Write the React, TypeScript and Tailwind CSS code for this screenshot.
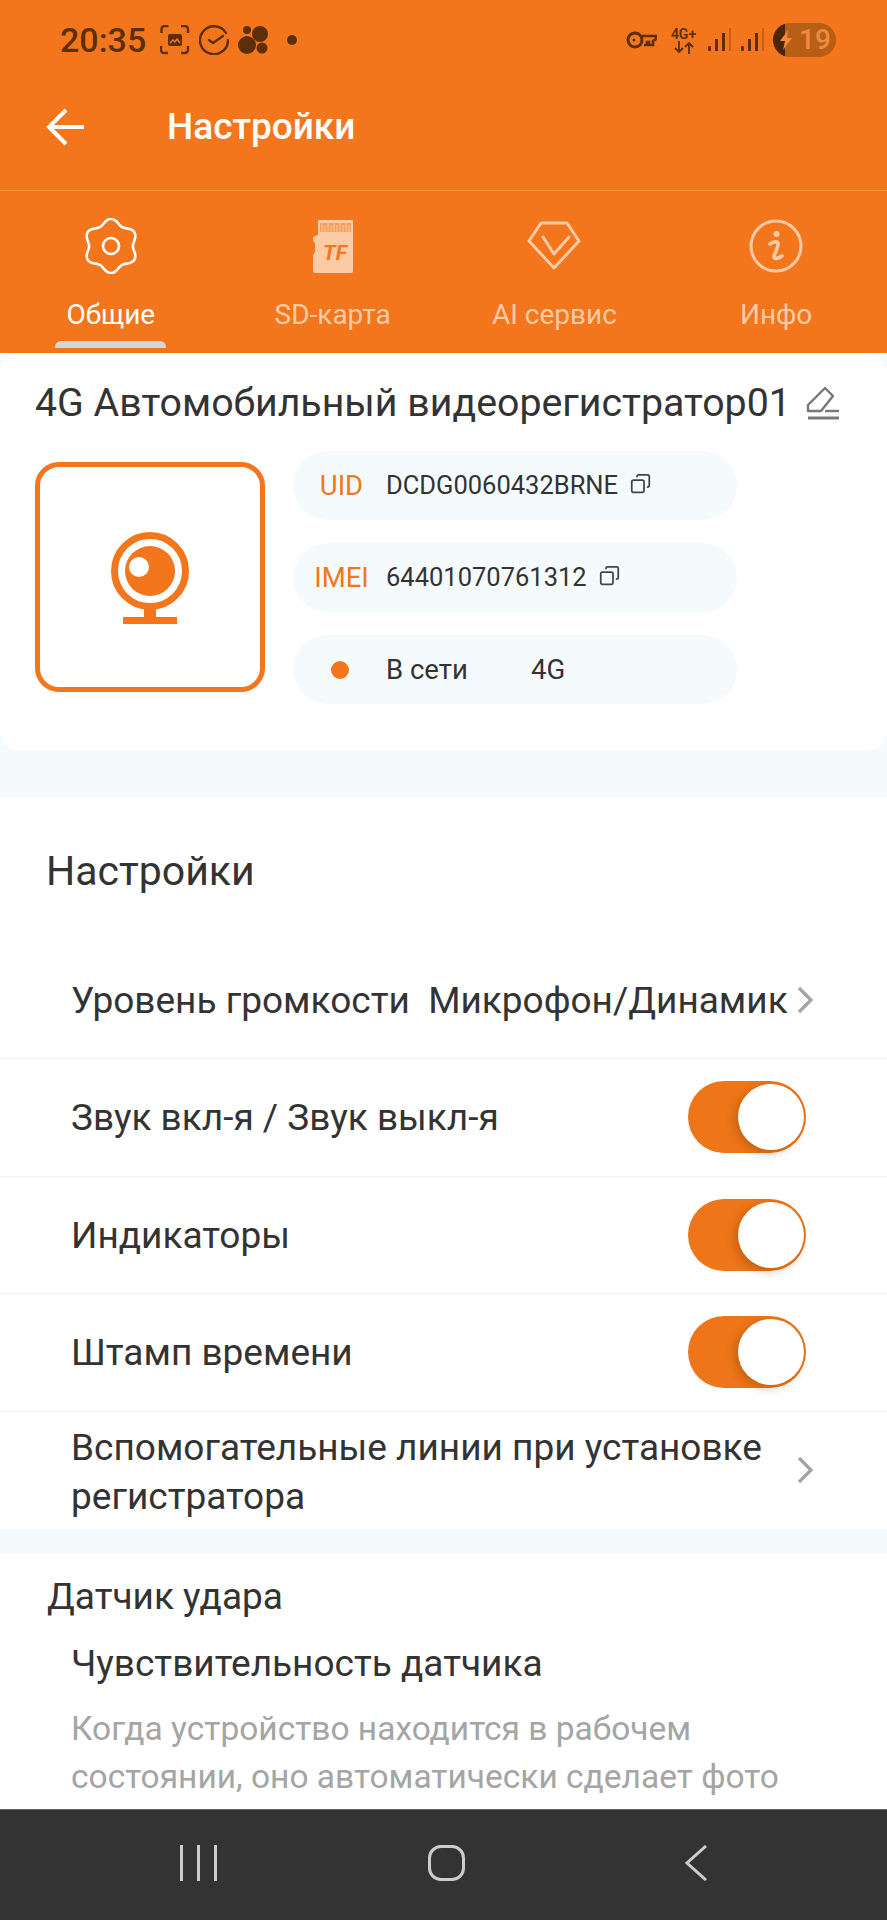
import { Copy } from "lucide-react"

const brown = "#5c2f08"

// six-lobed outline of the settings gear
const gearPath = () => {
    const pts: string[] = []
    for (let i = 0; i < 120; i++) {
        const t = (i / 120) * Math.PI * 2
        const r = 24.5 + 2.6 * Math.cos(6 * t)
        const x = 28 + r * Math.sin(t)
        const y = 28 - r * Math.cos(t)
        pts.push(`${x.toFixed(2)} ${y.toFixed(2)}`)
    }
    return "M" + pts.join("L") + "Z"
}

const GearIcon = () => (
    <svg width="56" height="56" viewBox="0 0 56 56" fill="none" stroke="#fff" strokeWidth="2.6">
        <path d={gearPath()} strokeLinejoin="round" />
        <circle cx="28" cy="28" r="8" />
    </svg>
)

const CardIcon = () => (
    <svg width="40" height="54" viewBox="0 0 40 54">
        <path d="M5 1h34a1 1 0 0 1 1 1v50a2 2 0 0 1-2 2H2a2 2 0 0 1-2-2V36l2-3v-9l-2-2v-4l5-2z" fill="#fbcba6" />
        <path d="M7 4h31v9H7z" fill="#f3761c" opacity="0.55" />
        <path d="M9 4v9M12 6v7M15 4v9M18 6v7M21 4v9M24 6v7M27 4v9M30 6v7M33 4v9M36 6v7" stroke="#fbcba6" strokeWidth="1" />
        <text x="22" y="41" textAnchor="middle" fontSize="21" fontWeight="700" fontStyle="italic" fill="#f3761c" fontFamily="Roboto, sans-serif">TF</text>
    </svg>
)

const GemIcon = () => (
    <svg width="54" height="50" viewBox="0 0 54 50" fill="none" stroke="#fbcba6" strokeWidth="3" strokeLinejoin="round" strokeLinecap="round">
        <path d="M14 2h26l12 18-25 27L2 20z" />
        <path d="M16 16l11 17 15-17" />
    </svg>
)

const InfoIcon = () => (
    <svg width="54" height="54" viewBox="0 0 54 54" fill="none" stroke="#fbcba6" strokeWidth="3">
        <circle cx="27" cy="27" r="25" />
        <circle cx="27.5" cy="15" r="3" fill="#fbcba6" stroke="none" />
        <path d="M21 25c3-2 7-3 8-1 1 3-4 11-4 14 0 3 5 1 8-1" strokeWidth="3.6" strokeLinecap="round" />
    </svg>
)

const Signal = () => (
    <svg width="23" height="24" viewBox="0 0 23 24">
        <rect x="0" y="18" width="3" height="5" rx="1" fill={brown} />
        <rect x="7" y="11" width="3" height="12" fill={brown} />
        <rect x="14" y="5" width="3" height="18" fill={brown} />
        <rect x="21" y="0" width="2" height="23" fill={brown} opacity="0.3" />
    </svg>
)

const StatusBar = () => (
    <div className="h-[80px] flex items-center pl-[60px] pr-[51px]">
        <span className="text-[34px] font-medium" style={{ color: brown }}>20:35</span>
        <svg className="ml-[14px]" width="30" height="30" viewBox="0 0 30 30" fill="none" stroke={brown} strokeWidth="2.4">
            <path d="M1.5 8V4a3 3 0 0 1 3-3h4M21 1h4a3 3 0 0 1 3 3v4M28 21v4a3 3 0 0 1-3 3h-4M8 28H4a3 3 0 0 1-3-3v-4" />
            <rect x="8" y="9" width="14" height="12" rx="2" fill={brown} stroke="none" />
            <path d="M10 18l3-3 2 2 2-3 3 4" stroke="#f3761c" strokeWidth="1.4" />
        </svg>
        <svg className="ml-[9px]" width="30" height="30" viewBox="0 0 30 30" fill="none" stroke={brown} strokeWidth="2.4" strokeLinecap="round">
            <path d="M27 8A14 14 0 1 0 29 15" />
            <path d="M10 15l4 3 10-7" />
        </svg>
        <svg className="ml-[9px]" width="30" height="30" viewBox="0 0 30 30" fill={brown}>
            <circle cx="9" cy="20" r="9" />
            <circle cx="22" cy="9" r="8" />
            <circle cx="24" cy="23" r="5.5" />
            <circle cx="9" cy="5" r="4" />
        </svg>
        <span className="ml-[19px] w-[10px] h-[10px] rounded-full" style={{ backgroundColor: brown }} />
        <div className="ml-auto flex items-center">
            <svg width="31" height="18" viewBox="0 0 31 18" fill="none" stroke={brown} strokeWidth="3">
                <circle cx="9" cy="9" r="7" />
                <path d="M16 5h14v3l-3 2v4h-4v-3h-2v3h-3" strokeWidth="2.6" />
                <circle cx="8" cy="9" r="1.5" fill={brown} stroke="none" />
            </svg>
            <div className="ml-[13px] w-[27px] flex flex-col items-center" style={{ color: brown }}>
                <span className="text-[14px] leading-[14px] font-semibold whitespace-nowrap">4G+</span>
                <svg width="20" height="13" viewBox="0 0 20 13" fill="none" stroke={brown} strokeWidth="1.8">
                    <path d="M5 0v11M1 7l4 4 4-4M15 13V2M11 6l4-4 4 4" />
                </svg>
            </div>
            <div className="ml-[11px]"><Signal /></div>
            <div className="ml-[10px]"><Signal /></div>
            <div className="ml-[9px] relative w-[63px] h-[34px] rounded-full bg-[#b85f15] overflow-hidden flex items-center">
                <div className="w-[12px] h-full bg-[#4c2606]" />
                <svg className="absolute left-[7px] top-[7px]" width="13" height="20" viewBox="0 0 13 20" fill="#f08a36">
                    <path d="M8 0L0 11h5l-2 9 9-12H7z" />
                </svg>
                <span className="ml-[14px] text-[28px] leading-none font-medium text-[#ec8c40]">19</span>
            </div>
        </div>
    </div>
)

const TopBar = () => (
    <div className="h-[111px] pb-[16px] flex items-center border-b border-[#f68f45]">
        <svg className="ml-[46px]" width="38" height="38" viewBox="0 0 38 38" fill="none" stroke="#fff" strokeWidth="4">
            <path d="M38 19H3M20 2L3 19l17 17" />
        </svg>
        <span className="ml-[83px] text-[37px] font-medium text-white">Настройки</span>
    </div>
)

const tabs = [
    { label: "Общие", icon: <GearIcon />, active: true },
    { label: "SD-карта", icon: <CardIcon />, active: false },
    { label: "AI сервис", icon: <GemIcon />, active: false },
    { label: "Инфо", icon: <InfoIcon />, active: false },
]

const Tabs = () => (
    <div className="h-[162px] grid grid-cols-4">
        {tabs.map((tab) => (
            <div key={tab.label} className="flex flex-col items-center pt-[27px]">
                <div className="h-[56px] flex items-center">{tab.icon}</div>
                <span className={`mt-[24px] text-[28px] leading-[34px] ${tab.active ? "text-white" : "text-[#fbcba6]"}`}>{tab.label}</span>
                {tab.active && <div className="mt-[9px] w-[111px] h-[7px] rounded-t-[6px] bg-[#d5d5d5]" />}
            </div>
        ))}
    </div>
)

const CopyIcon = () => <Copy size={21} strokeWidth={2} className="ml-[12px] mb-[4px] text-[#444] -scale-x-100" />

const DeviceCard = () => (
    <div className="bg-white rounded-[20px] pt-[28px] pb-[47px] pl-[35px] text-[#333]">
        <div className="flex items-center h-[44px]">
            <span className="text-[39.3px] leading-[44px] whitespace-nowrap">4G Автомобильный видеорегистратор01</span>
            <svg className="ml-[15px]" width="34" height="34" viewBox="0 0 34 34" fill="none" stroke="#777" strokeWidth="2.4">
                <path d="M2 25v-6L19 2l8 8-12 15z" strokeLinejoin="round" />
                <path d="M19 25h14" />
                <path d="M2 32h31" strokeWidth="3" />
            </svg>
        </div>
        <div className="mt-[26px] flex">
            <div className="mt-[11px] w-[230px] h-[230px] rounded-[24px] border-[5px] border-[#f3761c] flex items-center justify-center">
                <svg width="80" height="94" viewBox="0 0 80 94" className="mt-[2px]">
                    <circle cx="40" cy="40" r="35.5" fill="none" stroke="#f3761c" strokeWidth="7" />
                    <circle cx="40" cy="40" r="25" fill="#f3761c" />
                    <circle cx="29" cy="36" r="10" fill="#fff" />
                    <rect x="34" y="78" width="12" height="10" fill="#f3761c" />
                    <rect x="13" y="86" width="54" height="7" fill="#f3761c" />
                </svg>
            </div>
            <div className="ml-[28px] w-[444px] flex flex-col gap-[23px]">
                <div className="h-[69px] rounded-full bg-[#f5fafd] flex items-center">
                    <span className="w-[93px] pl-[4px] text-center text-[27.5px] text-[#f3761c]">UID</span>
                    <span className="text-[25.5px]">DCDG0060432BRNE</span>
                    <CopyIcon />
                </div>
                <div className="h-[69px] rounded-full bg-[#f5fafd] flex items-center">
                    <span className="w-[93px] pl-[4px] text-center text-[27.5px] text-[#f3761c]">IMEI</span>
                    <span className="text-[25.5px]">64401070761312</span>
                    <CopyIcon />
                </div>
                <div className="h-[69px] rounded-full bg-[#f5fafd] flex items-center">
                    <span className="w-[93px] flex justify-center"><span className="w-[18px] h-[18px] rounded-full bg-[#f3761c]" /></span>
                    <span className="w-[145px] text-[27.5px]">В сети</span>
                    <span className="text-[27.5px]">4G</span>
                </div>
            </div>
        </div>
    </div>
)

const Chevron = () => (
    <svg width="17" height="28" viewBox="0 0 17 28" fill="none" stroke="#a3a3a3" strokeWidth="3.2">
        <path d="M2 2l12 12L2 26" />
    </svg>
)

const Toggle = () => (
    <div className="w-[118px] h-[72px] rounded-full bg-[#ee7518] flex items-center justify-end pr-[2px]">
        <div className="w-[66px] h-[66px] rounded-full bg-white shadow-[-3px_3px_8px_rgba(120,60,0,0.35)]" />
    </div>
)

const toggleRows = ["Звук вкл-я / Звук выкл-я", "Индикаторы", "Штамп времени"]

const SettingsList = () => (
    <div className="bg-white text-[#333]">
        <h2 className="pt-[52px] pl-[46px] text-[41px] leading-[44px] mb-[48px]">Настройки</h2>
        <div className="h-[118px] pl-[71px] pr-[73px] border-b border-[#eef3f3] flex items-center justify-between">
            <span className="text-[37px] mt-[3px] whitespace-nowrap">Уровень громкости&nbsp; Микрофон/Динамик</span>
            <Chevron />
        </div>
        {toggleRows.map((label) => (
            <div key={label} className="h-[117.5px] pl-[71px] pr-[81px] border-b border-[#eef3f3] flex items-center justify-between">
                <span className="text-[37px] mt-[1px]">{label}</span>
                <Toggle />
            </div>
        ))}
        <div className="h-[117px] pl-[71px] pr-[73px] flex items-center justify-between">
            <span className="text-[37px] leading-[49px] w-[720px] mt-[3px]">Вспомогательные линии при установке регистратора</span>
            <Chevron />
        </div>
    </div>
)

const ShockSection = () => (
    <div className="mt-[24px] bg-white pt-[23px] text-[#333]">
        <h2 className="pl-[47px] text-[37px] leading-[42px]">Датчик удара</h2>
        <p className="mt-[25px] pl-[71px] text-[37px] leading-[42px]">Чувствительность датчика</p>
        <p className="mt-[20px] pl-[71px] pr-[90px] text-[33.5px] leading-[48px] text-[#a5a5a5]">Когда устройство находится в рабочем состоянии, оно автоматически сделает фото и видеофайл</p>
    </div>
)

const NavBar = () => (
    <div className="h-[111px] shrink-0 bg-[#333] border-t border-[#666] relative flex items-start">
        <div className="ml-[180px] mt-[35px] flex gap-[14px]">
            <div className="w-[3px] h-[36px] bg-[#ccc]" />
            <div className="w-[3px] h-[36px] bg-[#ccc]" />
            <div className="w-[3px] h-[36px] bg-[#ccc]" />
        </div>
        <div className="ml-[211px] mt-[35px] w-[37px] h-[36px] rounded-[13px] border-[3px] border-[#ccc]" />
        <svg className="ml-[219px] mt-[35px]" width="24" height="36" viewBox="0 0 24 36" fill="none" stroke="#ccc" strokeWidth="3">
            <path d="M22 1L3 18l19 17" />
        </svg>
    </div>
)

const App = () => {
    return (
        <div className="w-[887px] h-[1920px] flex flex-col overflow-hidden bg-[#f5fafd] font-[Roboto,sans-serif]">
            <div className="flex-1 min-h-0 overflow-hidden">
                <div className="bg-[#f3761c]">
                    <StatusBar />
                    <TopBar />
                    <Tabs />
                </div>
                <DeviceCard />
                <div className="h-[46px]" />
                <SettingsList />
                <ShockSection />
            </div>
            <NavBar />
        </div>
    )
}

export default App
